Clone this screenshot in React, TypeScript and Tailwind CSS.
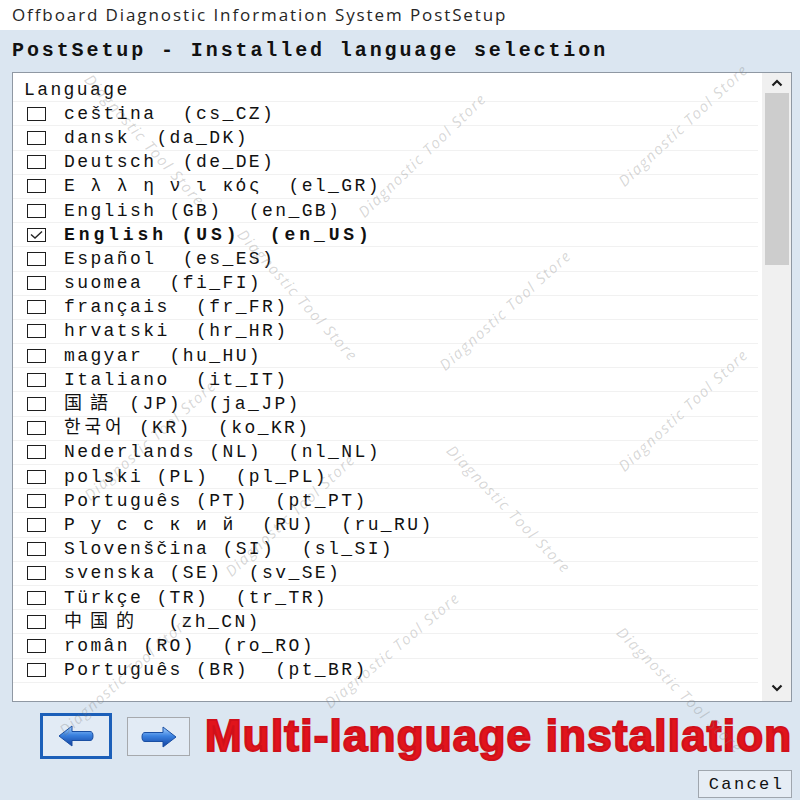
import React from 'react';

type Lang = {
    name: string;
    rest: string;
    wide?: 'cjk' | 'ko';
    bold?: boolean;
    checked?: boolean;
};

const languages: Lang[] = [
    { name: 'ceština', rest: '  (cs_CZ)' },
    { name: 'dansk', rest: '  (da_DK)' },
    { name: 'Deutsch', rest: '  (de_DE)' },
    { name: 'Ε λ λ η ν ι κός', rest: '  (el_GR)' },
    { name: 'English', rest: ' (GB)  (en_GB)' },
    { name: 'English', rest: ' (US)  (en_US)', bold: true, checked: true },
    { name: 'Español', rest: '  (es_ES)' },
    { name: 'suomea', rest: '  (fi_FI)' },
    { name: 'français', rest: '  (fr_FR)' },
    { name: 'hrvatski', rest: '  (hr_HR)' },
    { name: 'magyar', rest: '  (hu_HU)' },
    { name: 'Italiano', rest: '  (it_IT)' },
    { name: '国語', rest: ' (JP)  (ja_JP)', wide: 'cjk' },
    { name: '한국어', rest: ' (KR)  (ko_KR)', wide: 'ko' },
    { name: 'Nederlands', rest: ' (NL)  (nl_NL)' },
    { name: 'polski', rest: ' (PL)  (pl_PL)' },
    { name: 'Português', rest: ' (PT)  (pt_PT)' },
    { name: 'Р у с с к и й', rest: '  (RU)  (ru_RU)' },
    { name: 'Slovenščina', rest: ' (SI)  (sl_SI)' },
    { name: 'svenska', rest: ' (SE)  (sv_SE)' },
    { name: 'Türkçe', rest: ' (TR)  (tr_TR)' },
    { name: '中国的', rest: '  (zh_CN)', wide: 'cjk' },
    { name: 'român', rest: ' (RO)  (ro_RO)' },
    { name: 'Português', rest: ' (BR)  (pt_BR)' },
];

// faint store stamps spread over the window
const stamps = [
    'left-[145px] top-[140px] rotate-[48deg]',
    'left-[422px] top-[155px] rotate-[-44deg]',
    'left-[683px] top-[125px] rotate-[-43deg]',
    'left-[298px] top-[295px] rotate-[48deg]',
    'left-[505px] top-[310px] rotate-[-42deg]',
    'left-[683px] top-[410px] rotate-[-43deg]',
    'left-[509px] top-[509px] rotate-[46deg]',
    'left-[290px] top-[515px] rotate-[-43deg]',
    'left-[392px] top-[650px] rotate-[-40deg]',
    'left-[680px] top-[690px] rotate-[45deg]',
    'left-[150px] top-[440px] rotate-[-42deg]',
    'left-[125px] top-[675px] rotate-[-42deg]',
];

const Checkbox: React.FC<{ checked?: boolean }> = ({ checked }) => (
    <div className="w-[19px] h-[14px] border-[1.5px] border-[#1e1e1e] bg-white shrink-0 flex items-center justify-center">
        {checked && (
            <svg width="15" height="10" viewBox="0 0 15 10">
                <polyline points="2,4.5 6,8 13,1.5" fill="none" stroke="#222" strokeWidth="1.4" />
            </svg>
        )}
    </div>
);

const Chevron: React.FC<{ up?: boolean }> = ({ up }) => (
    <svg width="12" height="8" viewBox="0 0 12 8">
        <polyline
            points={up ? '1.5,6.5 6,2 10.5,6.5' : '1.5,1.5 6,6 10.5,1.5'}
            fill="none"
            stroke="#1c1c1c"
            strokeWidth="2.2"
        />
    </svg>
);

const Arrow: React.FC<{ id: string; flip?: boolean }> = ({ id, flip }) => (
    <svg width="36" height="22" viewBox="0 0 36 22" className={flip ? 'scale-x-[-1]' : ''}>
        <defs>
            <linearGradient id={id} x1="0" y1="0" x2="0" y2="1">
                <stop offset="0" stopColor="#a9d4ff" />
                <stop offset="0.45" stopColor="#3b82e0" />
                <stop offset="1" stopColor="#0f3f9e" />
            </linearGradient>
        </defs>
        <path
            d="M1 11 L14 1 L14 6.5 L32 6.5 Q35 6.5 35 11 Q35 15.5 32 15.5 L14 15.5 L14 21 Z"
            fill={`url(#${id})`}
            stroke="#1a4fa3"
            strokeWidth="1"
            strokeLinejoin="round"
        />
    </svg>
);

const LanguageRow: React.FC<{ lang: Lang }> = ({ lang }) => (
    <div className="h-[24.2px] flex items-center border-b border-[#f1f1f1] pl-[14px]">
        <Checkbox checked={lang.checked} />
        <span
            className={`ml-[18px] whitespace-pre text-[18px] leading-none ${
                lang.bold ? 'font-bold tracking-[3.9px]' : 'tracking-[2.4px]'
            }`}
        >
            <span className={lang.wide === 'cjk' ? 'tracking-[8px]' : lang.wide === 'ko' ? 'tracking-[4px]' : ''}>
                {lang.name}
            </span>
            {lang.rest}
        </span>
    </div>
);

export default function App() {
    return (
        <div className="relative w-[800px] h-[800px] overflow-hidden flex flex-col bg-[#dbe6f1] text-[#111] font-['Liberation_Mono','Noto_Sans_CJK_SC',monospace]">
            {/* window caption */}
            <div className="h-[30px] shrink-0 bg-white flex items-center pl-[12px] font-['Open_Sans',sans-serif] text-[17px] tracking-[1.9px] text-[#262626]">
                Offboard Diagnostic Information System PostSetup
            </div>

            <div className="h-[42px] shrink-0 flex items-center pl-[12px] text-[20px] font-bold tracking-[2.9px] whitespace-pre">
                PostSetup - Installed language selection
            </div>

            {/* language list */}
            <div className="ml-[12px] w-[780px] h-[630px] shrink-0 border border-[#8f98a3] bg-white flex">
                <div className="flex-1 pt-[5px] pr-[4px]">
                    <div className="h-[24.2px] flex items-center pl-[11px] text-[18px] tracking-[2.4px] leading-none border-b border-[#f1f1f1]">
                        Language
                    </div>
                    {languages.map((lang, i) => (
                        <LanguageRow key={i} lang={lang} />
                    ))}
                </div>
                <div className="w-[29px] bg-[#f0f0f0] flex flex-col items-center">
                    <div className="h-[20px] w-full flex items-center justify-center">
                        <Chevron up />
                    </div>
                    <div className="w-[24px] h-[172px] bg-[#cdcdcd]" />
                    <div className="flex-1" />
                    <div className="h-[26px] w-full flex items-center justify-center">
                        <Chevron />
                    </div>
                </div>
            </div>

            {/* navigation */}
            <div className="h-[68px] shrink-0 flex items-start pt-[11px] pl-[40px]">
                <button className="w-[72px] h-[46px] border-[3px] border-[#1b5fb9] bg-[#e2ebf5] flex items-center justify-center">
                    <Arrow id="back-grad" />
                </button>
                <button className="ml-[15px] mt-[4px] w-[63px] h-[39px] border border-[#a6a9ad] bg-[#e2ebf5] flex items-center justify-center">
                    <Arrow id="next-grad" flip />
                </button>
                <div className="ml-[15px] mt-[1px] font-['Liberation_Sans',Arial,sans-serif] font-bold text-[44px] leading-[44px] tracking-[1.2px] text-[#e1141c] [-webkit-text-stroke:2px_#d0101a] whitespace-nowrap">
                    Multi-language installation
                </div>
            </div>

            <div className="flex justify-end pr-[8px]">
                <button className="w-[94px] h-[28px] border border-[#9fa6ae] bg-[#e6edf5] text-[17px] tracking-[2.4px] leading-none flex items-center justify-center pl-[3px]">
                    Cancel
                </button>
            </div>

            <div className="absolute inset-0 pointer-events-none">
                {stamps.map((cls, i) => (
                    <div
                        key={i}
                        className={`absolute -translate-x-1/2 -translate-y-1/2 whitespace-nowrap font-['Open_Sans',sans-serif] italic text-[15px] tracking-[1.5px] text-[#7a7a7a]/30 ${cls}`}
                    >
                        Diagnostic Tool Store
                    </div>
                ))}
            </div>
        </div>
    );
}
